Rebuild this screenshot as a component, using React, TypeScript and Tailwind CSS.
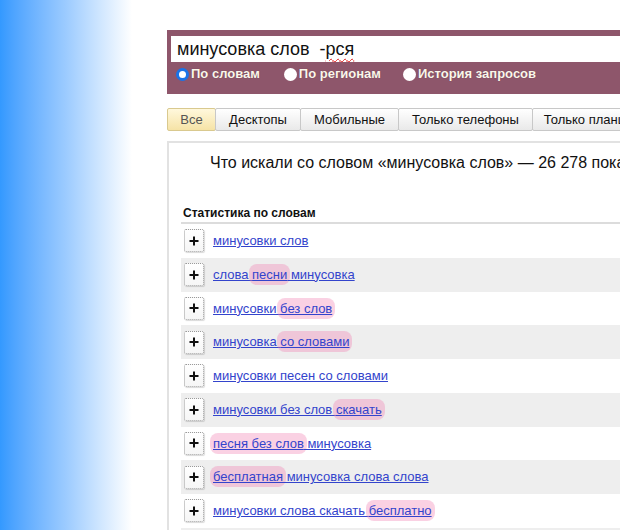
import React from 'react';

type Part = { text: string; mark?: boolean };

const rows: Part[][] = [
  [{ text: 'минусовки слов' }],
  [{ text: 'слова ' }, { text: 'песни', mark: true }, { text: ' минусовка' }],
  [{ text: 'минусовки ' }, { text: 'без слов', mark: true }],
  [{ text: 'минусовка ' }, { text: 'со словами', mark: true }],
  [{ text: 'минусовки песен со словами' }],
  [{ text: 'минусовки без слов ' }, { text: 'скачать', mark: true }],
  [{ text: 'песня без слов', mark: true }, { text: ' минусовка' }],
  [{ text: 'бесплатная', mark: true }, { text: ' минусовка слова слова' }],
  [{ text: 'минусовки слова скачать ' }, { text: 'бесплатно', mark: true }],
  [{ text: 'минусовка слова песни' }],
];

const tabs = [
  { label: 'Все', w: 'w-[49px]', active: true },
  { label: 'Десктопы', w: 'w-[86px]' },
  { label: 'Мобильные', w: 'w-[99px]' },
  { label: 'Только телефоны', w: 'w-[135px]' },
  { label: 'Только планшеты', w: 'w-[130px]' },
];

const Radio: React.FC<{ label: string; checked?: boolean; className?: string }> = ({ label, checked, className }) => (
  <div className={`flex items-center gap-[2px] ${className ?? ''}`}>
    {checked ? (
      <span className="w-[13px] h-[13px] rounded-full bg-white border-[3px] border-[#1a73e8]" />
    ) : (
      <span className="w-[13px] h-[13px] rounded-full bg-white" />
    )}
    <span className="text-[13px] font-bold text-[#fbf6ea] [text-shadow:0_0_1px_rgba(0,0,0,0.3)]">{label}</span>
  </div>
);

const PlusButton = () => (
  <div className="w-[20px] h-[23px] shrink-0 bg-gradient-to-b from-white to-[#f6f6f6] border border-dotted border-[#9a9a9a] rounded-[2px] shadow-[1px_1px_1px_rgba(0,0,0,0.15)] flex items-center justify-center">
    <svg width="10" height="10" viewBox="0 0 10 10">
      <path d="M5 0.5V9.5M0.5 5H9.5" stroke="#111" strokeWidth="2" />
    </svg>
  </div>
);

export default function App() {
  return (
    <div className="w-[620px] h-[530px] overflow-hidden bg-white flex font-['Liberation_Sans',Arial,sans-serif]">
      <div className="w-[132px] shrink-0 bg-gradient-to-r from-[#3399ff] via-[#9ccbff] to-white" />
      <div className="ml-[35px] w-[600px] shrink-0 pt-[30px]">
        {/* search box */}
        <div className="h-[64px] bg-[#8e566b] pl-[4px] pt-[6px]">
          <div className="h-[26px] bg-white pl-[6px] flex items-center text-[18px] text-[#111] whitespace-pre">
            минусовка слов  -<span className="underline decoration-wavy decoration-[#e02020] decoration-1 underline-offset-[3px]">рся</span>
          </div>
          <div className="flex items-center h-[22px] pl-[5px] mt-[1px]">
            <Radio label="По словам" checked />
            <Radio label="По регионам" className="ml-[24px]" />
            <Radio label="История запросов" className="ml-[22px]" />
          </div>
        </div>

        {/* tabs */}
        <div className="flex mt-[14px] h-[23px]">
          {tabs.map((t) => (
            <div
              key={t.label}
              className={`${t.w} shrink-0 h-full flex items-center justify-center text-[13px] whitespace-nowrap border border-[#c8c8c8] -ml-px first:ml-0 rounded-[2px] ${
                t.active
                  ? 'bg-gradient-to-b from-[#fff8dc] to-[#f6e3a6] text-[#555] border-[#d9c98f]'
                  : 'bg-gradient-to-b from-white to-[#e9e9e9] text-[#111]'
              }`}
            >
              {t.label}
            </div>
          ))}
        </div>

        {/* content panel */}
        <div className="mt-[10px] border-t-2 border-l-2 border-[#e2e2e2] h-[400px]">
          <div className="pl-[41px] pt-[9px] text-[16px] leading-[22px] text-[#111] whitespace-nowrap">
            Что искали со словом «минусовка слов» — 26 278 показов в месяц
          </div>
          <div className="ml-[12px] mt-[34px]">
            <div className="pl-[2px] text-[12px] leading-[11px] font-bold text-[#111] h-[16px] border-b-2 border-[#dcdcdc]">
              Статистика по словам
            </div>
            {rows.map((parts, i) => (
              <div
                key={i}
                className={`h-[33.75px] flex items-center pl-[3px] gap-[9px] ${i % 2 === 1 ? 'bg-[#eeeeee]' : 'bg-white'}`}
              >
                <PlusButton />
                <a className="text-[13px] text-[#3344cc] underline underline-offset-[1px] whitespace-nowrap cursor-pointer">
                  {parts.map((p, j) =>
                    p.mark ? (
                      <span key={j} className="bg-[#f27aae]/35 rounded-[8px] py-[3px] -mx-[3px] px-[3px]">
                        {p.text}
                      </span>
                    ) : (
                      <span key={j}>{p.text}</span>
                    )
                  )}
                </a>
              </div>
            ))}
          </div>
        </div>
      </div>
    </div>
  );
}
